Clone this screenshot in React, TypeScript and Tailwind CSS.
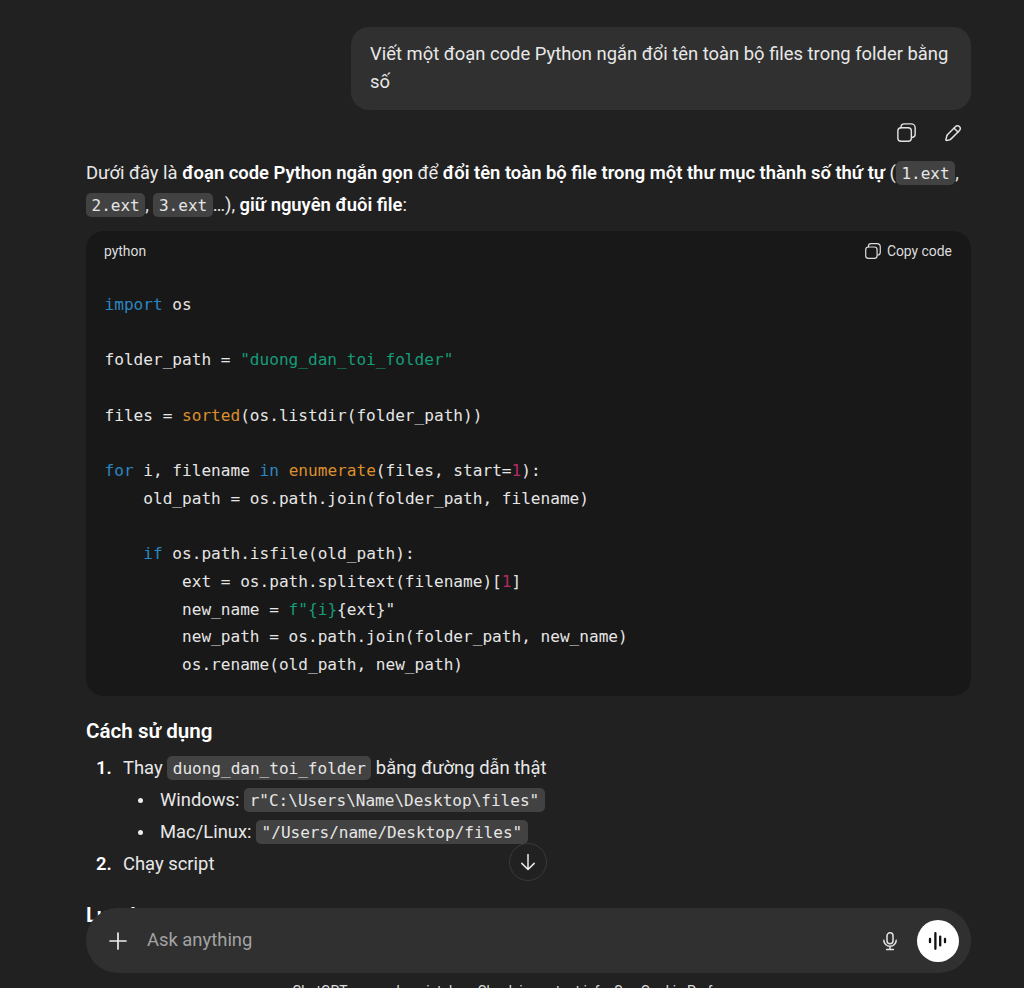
import React from "react";

const CopyIcon = ({ size = 20 }: { size?: number }) => (
  <svg width={size} height={size} viewBox="0 0 20 20" fill="none" stroke="currentColor" strokeWidth={1.5} strokeLinecap="round" strokeLinejoin="round">
    <path d="M4.2 5V4.4C4.2 2.4 5.7.9 7.7.9h7.2c2.3 0 4.2 1.9 4.2 4.2v6.6c0 1.9-1.4 3.4-3.3 3.6" />
    <rect x="0.9" y="5" width="14.2" height="14.2" rx="3.4" />
  </svg>
);

const EditIcon = () => (
  <svg width="18" height="18" viewBox="0 0 20 20" fill="none" stroke="currentColor" strokeWidth={1.6} strokeLinecap="round" strokeLinejoin="round">
    <path d="M3.2 12.4 12.6 3c1.4-1.4 3.2-1.4 4.5-.1 1.3 1.3 1.3 3.1-.1 4.5l-9.4 9.4c-.4.4-.9.7-1.5.8l-3.2.7c-.5.1-.9-.3-.8-.8l.7-3.2c.1-.6.4-1.1.8-1.5z" />
    <path d="M11.2 4.6l4.4 4.4" />
  </svg>
);

const K = ({ children }: { children: React.ReactNode }) => <span className="text-[#2b86c0]">{children}</span>;
const S = ({ children }: { children: React.ReactNode }) => <span className="text-[#169c79]">{children}</span>;
const B = ({ children }: { children: React.ReactNode }) => <span className="text-[#dc8f2c]">{children}</span>;
const N = ({ children }: { children: React.ReactNode }) => <span className="text-[#b52a63]">{children}</span>;

const Code = ({ children }: { children: React.ReactNode }) => (
  <code className="rounded-[5px] bg-[#424242] px-[5.5px] py-[2.5px] align-[1px] font-['DejaVu_Sans_Mono',monospace] text-[16.05px] leading-none font-normal text-[#e6e6e6]">
    {children}
  </code>
);

export default function App() {
  return (
    <div className="relative h-[988px] w-[1024px] overflow-hidden bg-[#212121] font-['Roboto','Noto_Sans',sans-serif] text-[18.4px] text-[#e8e8e8]">
      <div className="flex flex-col pl-[86px] pr-[53px] pt-[27px]">
        <div className="w-[620px] self-end rounded-[18px] bg-[#303030] px-[19px] pb-[14px] pt-[13px] leading-[28px]">
          Viết một đoạn code Python ngắn đổi tên toàn bộ files trong folder bằng số
        </div>
        <div className="mt-[13px] flex h-[19px] items-center justify-end gap-[28px] pr-[9px] text-[#e3e3e3]">
          <CopyIcon size={19} />
          <EditIcon />
        </div>
        <p className="mt-[15px] leading-[32px]">
          Dưới đây là <strong className="font-semibold text-white">đoạn code Python ngắn gọn</strong> để{" "}
          <strong className="font-semibold text-white">đổi tên toàn bộ file trong một thư mục thành số thứ tự</strong> (<Code>1.ext</Code>,{" "}
          <Code>2.ext</Code>, <Code>3.ext</Code>…), <strong className="font-semibold text-white">giữ nguyên đuôi file</strong>:
        </p>
        <div className="mt-[10px] h-[465px] rounded-[18px] bg-[#181818]">
          <div className="flex h-[40px] items-center justify-between pl-[18px] pr-[19px] text-[13.9px] text-[#dcdcdc]">
            <span>python</span>
            <span className="flex items-center gap-[6px]">
              <CopyIcon size={16} />
              Copy code
            </span>
          </div>
          <pre className="pl-[18.5px] pt-[20px] font-['DejaVu_Sans_Mono',monospace] text-[16.1px] leading-[27.7px] text-[#e6e6e6]">
            <K>import</K> os{"\n\n"}folder_path = <S>"duong_dan_toi_folder"</S>{"\n\n"}files = <B>sorted</B>(os.listdir(folder_path)){"\n\n"}
            <K>for</K> i, filename <K>in</K> <B>enumerate</B>(files, start=<N>1</N>):{"\n"}
            {"    "}old_path = os.path.join(folder_path, filename){"\n\n"}
            {"    "}<K>if</K> os.path.isfile(old_path):{"\n"}
            {"        "}ext = os.path.splitext(filename)[<N>1</N>]{"\n"}
            {"        "}new_name = <S>f"{"{i}"}</S>{"{ext}\""}{"\n"}
            {"        "}new_path = os.path.join(folder_path, new_name){"\n"}
            {"        "}os.rename(old_path, new_path)
          </pre>
        </div>
        <h3 className="mt-[21px] text-[20.6px] font-semibold leading-[28px] text-white">Cách sử dụng</h3>
        <ol className="mt-[7px] leading-[32px]">
          <li className="flex">
            <span className="w-[37px] pl-[10px] font-semibold text-white">1.</span>
            <div>
              <div>
                Thay <Code>duong_dan_toi_folder</Code> bằng đường dẫn thật
              </div>
              <ul>
                <li className="flex items-center pl-[15px]">
                  <span className="mr-[17px] h-[5px] w-[5px] rounded-full bg-[#ececec]" />
                  <span>
                    Windows: <Code>r"C:\Users\Name\Desktop\files"</Code>
                  </span>
                </li>
                <li className="flex items-center pl-[15px]">
                  <span className="mr-[17px] h-[5px] w-[5px] rounded-full bg-[#ececec]" />
                  <span>
                    Mac/Linux: <Code>"/Users/name/Desktop/files"</Code>
                  </span>
                </li>
              </ul>
            </div>
          </li>
          <li className="flex">
            <span className="w-[37px] pl-[10px] font-semibold text-white">2.</span>
            <div>Chạy script</div>
          </li>
        </ol>
        <h3 className="mt-[21px] text-[20.6px] font-semibold leading-[28px] text-white">Lưu ý</h3>
      </div>

      {/* scroll to bottom */}
      <div className="absolute left-[509px] top-[843px] flex h-[38px] w-[38px] items-center justify-center rounded-full border border-[#3a3a3a] bg-[#212121] text-[#ececec]">
        <svg width="20" height="20" viewBox="0 0 20 20" fill="none" stroke="currentColor" strokeWidth={1.5} strokeLinecap="round" strokeLinejoin="round">
          <path d="M10 2.5v15M3.8 11.4 10 17.5l6.2-6.1" />
        </svg>
      </div>

      {/* composer */}
      <div className="absolute bottom-0 left-0 right-0 h-[48px] bg-[#212121]" />
      <div className="absolute left-[86px] top-[908px] flex h-[65px] w-[885px] items-center rounded-[32px] bg-[#303030] pl-[23px] pr-[12px]">
        <svg width="18" height="18" viewBox="0 0 18 18" fill="none" stroke="#ececec" strokeWidth={1.7} strokeLinecap="round">
          <path d="M9 1v16M1 9h16" />
        </svg>
        <span className="ml-[20px] flex-1 pb-[2px] text-[18.4px] text-[#a3a3a3]">Ask anything</span>
        <svg className="mr-[17px]" width="20" height="20" viewBox="0 0 20 20" fill="none" stroke="#e3e3e3" strokeWidth={1.5} strokeLinecap="round">
          <rect x="7" y="1.8" width="6" height="11" rx="3" />
          <path d="M3.8 9.2c0 3.4 2.8 6 6.2 6s6.2-2.6 6.2-6M10 15.2v3M6.6 18.4h6.8" />
        </svg>
        <div className="flex h-[42px] w-[42px] items-center justify-center rounded-full bg-white">
          <svg width="20" height="20" viewBox="0 0 20 20" fill="none" stroke="#111" strokeWidth={2.3} strokeLinecap="round">
            <path d="M2 7.8v3.4M7.4 2.2v15.6M12.2 5.6v8.8M17 7.8v3.4" />
          </svg>
        </div>
      </div>
      <div className="absolute left-[86px] top-[982px] w-[885px] text-center text-[13.9px] leading-[18px] text-[#dcdcdc]">
        ChatGPT can make mistakes. Check important info. See Cookie Preferences.
      </div>
    </div>
  );
}
